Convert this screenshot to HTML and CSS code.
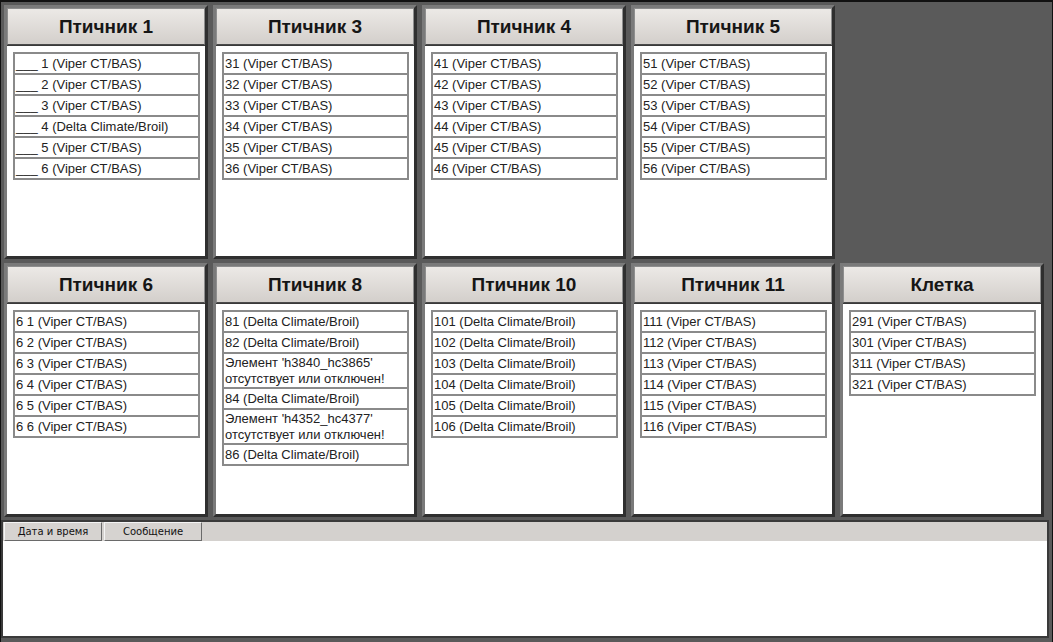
FILE: index.html
```html
<!DOCTYPE html>
<html lang="ru">
<head>
    <meta charset="UTF-8">
    <title>Птичники</title>
    <link rel="stylesheet" href="styles.css">
</head>
<body>
    <div class="houses">
        <div class="house">
            <div class="house-title">Птичник 1</div>
            <div class="house-body">
                <table class="units">
                    <tr><td>___ 1 (Viper CT/BAS)</td></tr>
                    <tr><td>___ 2 (Viper CT/BAS)</td></tr>
                    <tr><td>___ 3 (Viper CT/BAS)</td></tr>
                    <tr><td>___ 4 (Delta Climate/Broil)</td></tr>
                    <tr><td>___ 5 (Viper CT/BAS)</td></tr>
                    <tr><td>___ 6 (Viper CT/BAS)</td></tr>
                </table>
            </div>
        </div>
        <div class="house">
            <div class="house-title">Птичник 3</div>
            <div class="house-body">
                <table class="units">
                    <tr><td>31 (Viper CT/BAS)</td></tr>
                    <tr><td>32 (Viper CT/BAS)</td></tr>
                    <tr><td>33 (Viper CT/BAS)</td></tr>
                    <tr><td>34 (Viper CT/BAS)</td></tr>
                    <tr><td>35 (Viper CT/BAS)</td></tr>
                    <tr><td>36 (Viper CT/BAS)</td></tr>
                </table>
            </div>
        </div>
        <div class="house">
            <div class="house-title">Птичник 4</div>
            <div class="house-body">
                <table class="units">
                    <tr><td>41 (Viper CT/BAS)</td></tr>
                    <tr><td>42 (Viper CT/BAS)</td></tr>
                    <tr><td>43 (Viper CT/BAS)</td></tr>
                    <tr><td>44 (Viper CT/BAS)</td></tr>
                    <tr><td>45 (Viper CT/BAS)</td></tr>
                    <tr><td>46 (Viper CT/BAS)</td></tr>
                </table>
            </div>
        </div>
        <div class="house">
            <div class="house-title">Птичник 5</div>
            <div class="house-body">
                <table class="units">
                    <tr><td>51 (Viper CT/BAS)</td></tr>
                    <tr><td>52 (Viper CT/BAS)</td></tr>
                    <tr><td>53 (Viper CT/BAS)</td></tr>
                    <tr><td>54 (Viper CT/BAS)</td></tr>
                    <tr><td>55 (Viper CT/BAS)</td></tr>
                    <tr><td>56 (Viper CT/BAS)</td></tr>
                </table>
            </div>
        </div>
        <div class="empty"></div>

        <div class="house">
            <div class="house-title">Птичник 6</div>
            <div class="house-body">
                <table class="units">
                    <tr><td>6 1 (Viper CT/BAS)</td></tr>
                    <tr><td>6 2 (Viper CT/BAS)</td></tr>
                    <tr><td>6 3 (Viper CT/BAS)</td></tr>
                    <tr><td>6 4 (Viper CT/BAS)</td></tr>
                    <tr><td>6 5 (Viper CT/BAS)</td></tr>
                    <tr><td>6 6 (Viper CT/BAS)</td></tr>
                </table>
            </div>
        </div>
        <div class="house">
            <div class="house-title">Птичник 8</div>
            <div class="house-body">
                <table class="units">
                    <tr><td>81 (Delta Climate/Broil)</td></tr>
                    <tr><td>82 (Delta Climate/Broil)</td></tr>
                    <tr><td class="two-line">Элемент 'h3840_hc3865' отсутствует или отключен!</td></tr>
                    <tr><td>84 (Delta Climate/Broil)</td></tr>
                    <tr><td class="two-line">Элемент 'h4352_hc4377' отсутствует или отключен!</td></tr>
                    <tr><td>86 (Delta Climate/Broil)</td></tr>
                </table>
            </div>
        </div>
        <div class="house">
            <div class="house-title">Птичник 10</div>
            <div class="house-body">
                <table class="units">
                    <tr><td>101 (Delta Climate/Broil)</td></tr>
                    <tr><td>102 (Delta Climate/Broil)</td></tr>
                    <tr><td>103 (Delta Climate/Broil)</td></tr>
                    <tr><td>104 (Delta Climate/Broil)</td></tr>
                    <tr><td>105 (Delta Climate/Broil)</td></tr>
                    <tr><td>106 (Delta Climate/Broil)</td></tr>
                </table>
            </div>
        </div>
        <div class="house">
            <div class="house-title">Птичник 11</div>
            <div class="house-body">
                <table class="units">
                    <tr><td>111 (Viper CT/BAS)</td></tr>
                    <tr><td>112 (Viper CT/BAS)</td></tr>
                    <tr><td>113 (Viper CT/BAS)</td></tr>
                    <tr><td>114 (Viper CT/BAS)</td></tr>
                    <tr><td>115 (Viper CT/BAS)</td></tr>
                    <tr><td>116 (Viper CT/BAS)</td></tr>
                </table>
            </div>
        </div>
        <div class="house">
            <div class="house-title">Клетка</div>
            <div class="house-body">
                <table class="units">
                    <tr><td>291 (Viper CT/BAS)</td></tr>
                    <tr><td>301 (Viper CT/BAS)</td></tr>
                    <tr><td>311 (Viper CT/BAS)</td></tr>
                    <tr><td>321 (Viper CT/BAS)</td></tr>
                </table>
            </div>
        </div>
    </div>

    <div class="log">
        <div class="log-head">
            <div class="log-tab">Дата и время</div>
            <div class="log-tab">Сообщение</div>
        </div>
        <div class="log-body"></div>
    </div>
</body>
</html>
```

FILE: styles.css
```css
body {
    margin: 0;
    background-color: #5a5a5a;
    border-top: 2px solid #111;
    border-left: 1px solid #111;
    border-right: 1px solid #111;
    font-family: "Liberation Sans", Arial, sans-serif;
    color: #222;
    height: 640px;
    overflow: hidden;
}
.houses {
    display: grid;
    grid-template-columns: repeat(5, 204px);
    grid-auto-rows: 254px;
    column-gap: 5px;
    row-gap: 4px;
    padding: 3px 0 0 3px;
}
.house {
    border: 3px solid;
    border-color: #7a7a7a #2f2f2f #2f2f2f #7a7a7a;
    background-color: #3a3a3a;
    display: flex;
    flex-direction: column;
    gap: 1px;
}
.house-title {
    height: 35px;
    border: 1px solid #8e8e8e;
    border-bottom-color: #4a4a4a;
    background: linear-gradient(#ece9e6, #d3cfcb);
    display: flex;
    align-items: center;
    justify-content: center;
    font-size: 19px;
    font-weight: bold;
    color: #161616;
}
.house-body {
    flex: 1;
    background-color: #fff;
    padding: 6px 5px 0 6px;
}
.units {
    width: 100%;
    border-collapse: collapse;
    border: 2px solid #8a8a8a;
}
.units td {
    border: 2px solid #8a8a8a;
    padding: 2px 2px 1px 1px;
    font-size: 13px;
    line-height: 16px;
    color: #222;
}
.units td.two-line {
    line-height: 16px;
    padding: 1px 2px 0 1px;
}
.log {
    margin: 3px 3px 0 0;
    height: 114px;
    border: 2px solid #3a3a3a;
    display: flex;
    flex-direction: column;
}
.log-head {
    height: 19px;
    background-color: #d4d1ce;
    display: flex;
    gap: 2px;
    padding-left: 1px;
}
.log-tab {
    width: 96px;
    height: 17px;
    border: 1px solid;
    border-color: #f4f4f4 #6a6a6a #6a6a6a #f4f4f4;
    background-color: #d6d3d0;
    font-family: "DejaVu Sans", Tahoma, sans-serif;
    font-size: 10px;
    display: flex;
    align-items: center;
    justify-content: center;
    color: #111;
}
.log-body {
    flex: 1;
    background-color: #fff;
}
```
